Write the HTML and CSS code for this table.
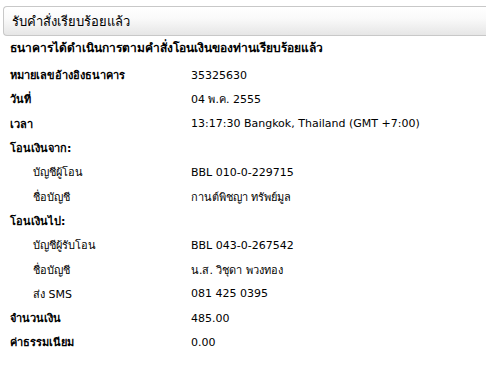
FILE: index.html
```html
<!DOCTYPE html>
<html lang="th">
<head>
  <meta charset="UTF-8" />
  <title>รับคำสั่งเรียบร้อยแล้ว</title>
  <link rel="stylesheet" href="styles.css">
</head>
<body>
  <div class="result">
    <div class="result-head">รับคำสั่งเรียบร้อยแล้ว</div>
    <div class="notice">ธนาคารได้ดำเนินการตามคำสั่งโอนเงินของท่านเรียบร้อยแล้ว</div>

    <div class="info">
      <div class="row"><span class="label bold">หมายเลขอ้างอิงธนาคาร</span><span class="value">35325630</span></div>
      <div class="row"><span class="label bold">วันที่</span><span class="value">04 พ.ค. 2555</span></div>
      <div class="row"><span class="label bold">เวลา</span><span class="value">13:17:30 Bangkok, Thailand (GMT +7:00)</span></div>

      <div class="row"><span class="label bold">โอนเงินจาก:</span></div>
      <div class="row"><span class="label sub">บัญชีผู้โอน</span><span class="value">BBL 010-0-229715</span></div>
      <div class="row"><span class="label sub">ชื่อบัญชี</span><span class="value">กานต์พิชญา ทรัพย์มูล</span></div>

      <div class="row"><span class="label bold">โอนเงินไป:</span></div>
      <div class="row"><span class="label sub">บัญชีผู้รับโอน</span><span class="value">BBL 043-0-267542</span></div>
      <div class="row"><span class="label sub">ชื่อบัญชี</span><span class="value">น.ส. วิชุดา พวงทอง</span></div>
      <div class="row"><span class="label sub">ส่ง SMS</span><span class="value">081 425 0395</span></div>

      <div class="row"><span class="label bold">จำนวนเงิน</span><span class="value">485.00</span></div>
      <div class="row"><span class="label bold">ค่าธรรมเนียม</span><span class="value">0.00</span></div>
    </div>
  </div>
</body>
</html>
```

FILE: styles.css
```css
* { box-sizing: border-box; }
body {
  margin: 0;
  background: #fff;
  color: #000;
  font-family: "DejaVu Sans", "Noto Sans", sans-serif;
  font-size: 11px;
}
.result {
  padding-top: 6px;
}
.result-head {
  margin-left: 3px;
  height: 30px;
  padding-left: 8px;
  display: flex;
  align-items: center;
  font-size: 13px;
  border: 1px solid #c8c8c8;
  border-right: none;
  border-radius: 4px 0 0 4px;
  background: linear-gradient(#fff, #fafafa 40%, #e6e6e6);
}
.notice {
  height: 24px;
  line-height: 24px;
  padding-left: 10px;
  font-size: 12px;
  font-weight: bold;
}
.info {
  padding-top: 3px;
}
.row {
  display: flex;
  height: 24.3px;
  align-items: center;
}
.label {
  width: 190px;
  flex-shrink: 0;
  padding-left: 10px;
}
.label.bold {
  font-weight: bold;
}
.label.sub {
  padding-left: 33px;
}
.value {
  padding-left: 1px;
}
```
